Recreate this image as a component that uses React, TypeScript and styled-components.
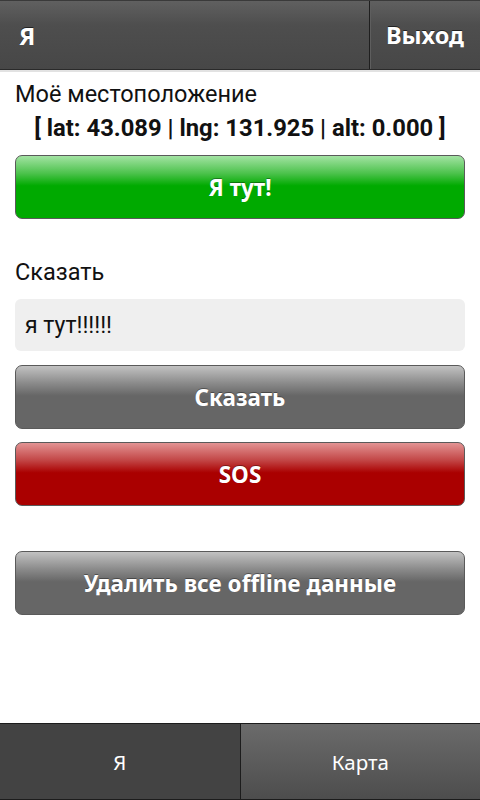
import React from "react";
import styled, { createGlobalStyle } from "styled-components";

const Global = createGlobalStyle`
  html, body { margin: 0; padding: 0; background: #fff; }
  body { font-family: Roboto, "Noto Sans", sans-serif; }
  * { box-sizing: border-box; }
`;

const Screen = styled.div`
  width: 480px;
  height: 800px;
  display: flex;
  flex-direction: column;
  background: #fff;
  overflow: hidden;
`;

const Header = styled.div`
  height: 70px;
  display: flex;
  background: linear-gradient(#606060 0%, #4e4e4e 35%, #474747 100%);
  border-top: 1px solid #3a3a3a;
  border-bottom: 1px solid #2a2a2a;
  box-shadow: 0 2px 0 #e2e2e2;
  margin-bottom: 3px;
`;

const HeaderTitle = styled.div`
  flex: 1;
  display: flex;
  align-items: center;
  padding-left: 19px;
  font-family: "Noto Sans", "Open Sans", sans-serif;
  font-weight: 700;
  font-size: 24px;
  color: #fff;
  text-shadow: 0 -1px 0 #222;
`;

const HeaderButton = styled.div`
  width: 111px;
  display: flex;
  align-items: center;
  justify-content: center;
  border-left: 1px solid #1f1f1f;
  box-shadow: inset 1px 0 0 #5e5e5e;
  font-family: "Noto Sans", "Open Sans", sans-serif;
  font-weight: 700;
  font-size: 23.5px;
  color: #fff;
  text-shadow: 0 -1px 0 #222;
`;

const Content = styled.div`
  flex: 1;
  padding: 7px 15px 0;
  display: flex;
  flex-direction: column;
`;

const Label = styled.div<{ $top?: number }>`
  font-size: 23.5px;
  color: #111;
  line-height: 28px;
  margin-top: ${(p) => p.$top ?? 0}px;
`;

const Coords = styled.div`
  font-weight: 700;
  font-size: 23.8px;
  color: #111;
  text-align: center;
  line-height: 28px;
  margin: 6px 0 13px;
`;

const palette = {
  green: { light: "#a3e3a3", mid: "#4cc24c", base: "#00aa00" },
  gray: { light: "#c2c2c2", mid: "#8a8a8a", base: "#666666" },
  red: { light: "#e39393", mid: "#c24545", base: "#aa0000" },
};

const Button = styled.div<{ $color: keyof typeof palette; $top?: number }>`
  height: 64px;
  margin-top: ${(p) => p.$top ?? 0}px;
  border: 1px solid #5a5a5a;
  border-radius: 7px;
  background: ${(p) =>
    `linear-gradient(${palette[p.$color].light} 0%, ${palette[p.$color].mid} 28%, ${palette[p.$color].base} 48%, ${palette[p.$color].base} 100%)`};
  display: flex;
  align-items: center;
  justify-content: center;
  font-family: "Noto Sans", "Open Sans", sans-serif;
  font-weight: 700;
  font-size: 22.5px;
  color: #fff;
  text-shadow: 0 -1px 0 rgba(0, 0, 0, 0.35);
`;

const Input = styled.div`
  height: 52px;
  margin: 13px 0 14px;
  background: #efefef;
  border-radius: 6px;
  display: flex;
  align-items: center;
  padding-left: 10px;
  font-size: 23px;
  color: #111;
`;

const TabBar = styled.div`
  height: 77px;
  display: flex;
  border-top: 1px solid #1c1c1c;
  border-bottom: 1px solid #1c1c1c;
`;

const Tab = styled.div<{ $active?: boolean }>`
  flex: 1;
  display: flex;
  align-items: center;
  justify-content: center;
  font-family: "Noto Sans", "Open Sans", sans-serif;
  font-size: 20.5px;
  color: #fff;
  background: ${(p) =>
    p.$active ? "#434343" : "linear-gradient(#6b6b6b, #4d4d4d)"};
  & + & {
    border-left: 1px solid #1c1c1c;
  }
`;

export default function App() {
  return (
    <>
      <Global />
      <Screen>
        <Header>
          <HeaderTitle>Я</HeaderTitle>
          <HeaderButton>Выход</HeaderButton>
        </Header>
        <Content>
          <Label>Моё местоположение</Label>
          <Coords>[ lat: 43.089 | lng: 131.925 | alt: 0.000 ]</Coords>
          <Button $color="green">Я тут!</Button>
          <Label $top={39}>Сказать</Label>
          <Input>я тут!!!!!!</Input>
          <Button $color="gray">Сказать</Button>
          <Button $color="red" $top={13}>SOS</Button>
          <Button $color="gray" $top={45}>Удалить все offline данные</Button>
        </Content>
        <TabBar>
          <Tab $active>Я</Tab>
          <Tab>Карта</Tab>
        </TabBar>
      </Screen>
    </>
  );
}
